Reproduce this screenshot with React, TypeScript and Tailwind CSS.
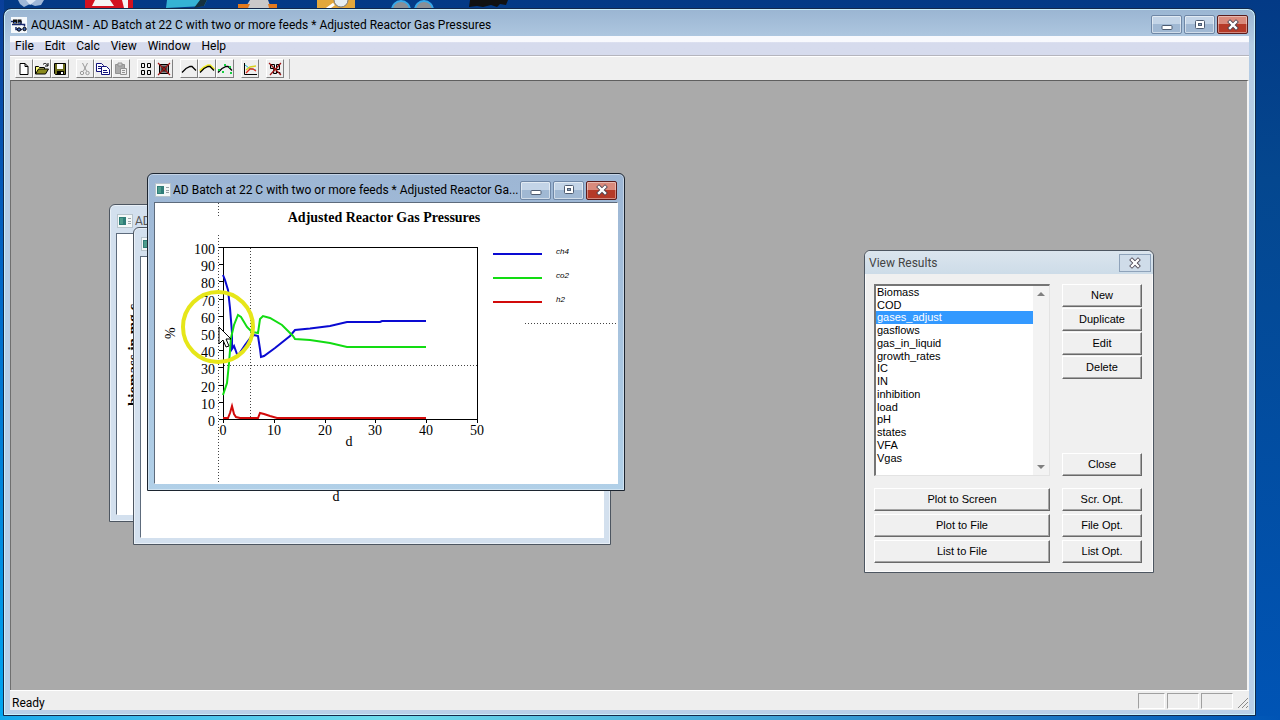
import type { ReactNode } from "react";

const MENUS = ["File", "Edit", "Calc", "View", "Window", "Help"];

const RESULTS = [
  "Biomass",
  "COD",
  "gases_adjust",
  "gasflows",
  "gas_in_liquid",
  "growth_rates",
  "IC",
  "IN",
  "inhibition",
  "load",
  "pH",
  "states",
  "VFA",
  "Vgas",
];

const SERIES = [
  {
    name: "ch4",
    color: "#0a0ad2",
    points:
      "68,72 70,77 73,87 75,105 77,130 77,146 79,143 82,151 84,151 90,142 96,134 99,132 103,133 105,146 106,154 109,153 120,145 135,133 140,127 155,125.500 175,123 192,119 225,119 227,118 271,118",
  },
  {
    name: "co2",
    color: "#12dc12",
    points:
      "68,192 72,180 74,160 76,135 79,122 83,112 86,114 92,124 97,129 103,130 105,116 108,113 115,115 127,122 138,133 140,136 155,137 175,140 192,144 271,144",
  },
  {
    name: "h2",
    color: "#d20a0a",
    points: "68,215 73,215 75,210 77,203 79,211 81,214 85,215 103,215 105,210 109,211 115,213 122,215 271,215",
  },
];

function ToolButton({ label, children }: { label: string; children: ReactNode }) {
  return (
    <button
      type="button"
      aria-label={label}
      className="flex h-[19px] w-[18px] items-center justify-center border border-t-white border-r-[#808080] border-b-[#808080] border-l-white bg-[#efefef]"
    >
      <svg viewBox="0 0 16 16" className="h-4 w-4 shrink-0" fill="none" stroke="#000">
        {children}
      </svg>
    </button>
  );
}

function Toolbar() {
  return (
    <div className="flex h-6 items-center border-t border-white bg-[#efefef] pl-[5px]">
      <div className="flex gap-[7px]">
        <div className="flex">
          <ToolButton label="New">
            <path d="M4 2.500h5l3 3v8H4zM9 2.500v3h3" fill="#fff" />
          </ToolButton>
          <ToolButton label="Open">
            <path d="M1.500 13V5.500h3l1 1h5V8" fill="#ffff80" />
            <path d="M1.500 13l3-5h10l-3 5z" fill="#8a8a1c" />
            <path d="M9 3.500c2-2 3.500-1 4.500 1M14 2v3h-3" />
          </ToolButton>
          <ToolButton label="Save">
            <path d="M2.500 2.500h11v11h-10l-1-1z" fill="#6c6c1a" />
            <path d="M5 3h6v5H5z" fill="#fff" stroke="none" />
            <path d="M5 10h7v4H5z" fill="#000" stroke="none" />
            <path d="M9 11h2v2H9z" fill="#fff" stroke="none" />
          </ToolButton>
        </div>
        <div className="flex">
          <ToolButton label="Cut">
            <g stroke="#999">
              <path d="M5.500 2l4 8M10.500 2l-4 8" />
              <circle cx="5" cy="12" r="1.700" />
              <circle cx="10.500" cy="12" r="1.700" />
            </g>
          </ToolButton>
          <ToolButton label="Copy">
            <path d="M1.500 2.500h5l2 2v6h-7z" fill="#fff" stroke="#10107a" />
            <path d="M6.500 5.500h5l3 3v5h-8z" fill="#fff" stroke="#10107a" />
            <path d="M3 5.500h3M3 7.500h3M8 9.500h4M8 11.500h5" stroke="#10107a" />
          </ToolButton>
          <ToolButton label="Paste">
            <path d="M2.500 3.500h9v9h-9z" fill="#aaa" stroke="#929292" />
            <path d="M5 2h4v3H5z" fill="#ccc" stroke="#929292" />
            <path d="M7.500 7.500h6v6h-6z" fill="#eee" stroke="#929292" />
            <path d="M9 9.500h3M9 11.500h3" stroke="#929292" />
          </ToolButton>
        </div>
        <div className="flex">
          <ToolButton label="Compartments">
            <path d="M3.500 2.500h3v4h-3zM9.500 2.500h3v4h-3zM3.500 9.500h3v4h-3zM9.500 9.500h3v4h-3z" />
          </ToolButton>
          <ToolButton label="Delete compartments">
            <path d="M3.500 3.500h9v9h-9z" fill="#888" />
            <path d="M6 6h4v4H6z" fill="#444" />
            <path d="M2 2l12 12M14 2L2 14" stroke="#a01414" strokeWidth="1.200" />
          </ToolButton>
        </div>
        <div className="flex">
          <ToolButton label="Simulation">
            <path d="M1 11.500l4-4 4-2h2l4 4" strokeWidth="1.300" />
          </ToolButton>
          <ToolButton label="Sensitivity analysis">
            <path d="M1 10l4-3.500 4-2h2l4 4" stroke="#f2ee2a" strokeWidth="2.500" />
            <path d="M1 11.500l4-4 4-2h2l4 4" strokeWidth="1.300" />
          </ToolButton>
          <ToolButton label="Parameter estimation">
            <path d="M1 11.500l4-4 4-2h2l4 4" strokeWidth="1.300" />
            <path d="M1 8h2v2H1zM5 10h2v2H5zM7 3h2v2H7zM12 5h2v2h-2zM13 11h2v2h-2z" fill="#16d040" stroke="none" />
          </ToolButton>
        </div>
        <div className="flex">
          <ToolButton label="View results">
            <path d="M2.500 2v11.500H15" />
            <path d="M3 4l4 3 3 1 4 1" stroke="#18b8c8" />
            <path d="M4 9l4-3 6-1" stroke="#d8d020" strokeWidth="1.500" />
            <path d="M4 12l4-4h3l3 2" stroke="#e03020" strokeWidth="1.300" />
          </ToolButton>
        </div>
        <div className="flex">
          <ToolButton label="Delete states">
            <path d="M3.500 3.500h4v4h-4zM9.500 3.500h3v5h-3zM6.500 8.500h3v4h-3z" fill="#ccc" />
            <path d="M10 11.500h3v2" />
            <path d="M2 2l12 12M14 2L3 14" stroke="#a01414" strokeWidth="1.200" />
          </ToolButton>
        </div>
      </div>
      <div className="ml-[5px] h-5 w-px bg-[#a8a8a8]" />
    </div>
  );
}

function MinimizeGlyph() {
  return (
    <svg viewBox="0 0 14 12" className="h-3 w-3.5">
      <rect x="2" y="6.500" width="10" height="4" rx="1" fill="#fff" stroke="#4d5b70" />
    </svg>
  );
}

function MaximizeGlyph() {
  return (
    <svg viewBox="0 0 14 12" className="h-3 w-3.5">
      <rect x="2.500" y="1.500" width="9" height="8" rx="1" fill="#fff" stroke="#4d5b70" />
      <rect x="5.500" y="4.500" width="3" height="2" fill="#8da4c0" stroke="#4d5b70" />
    </svg>
  );
}

function CloseGlyph() {
  return (
    <svg viewBox="0 0 14 12" className="h-3 w-3.5" strokeLinecap="square">
      <path d="M4 3l6 6M10 3l-6 6" stroke="#4b4350" strokeWidth="4" />
      <path d="M4 3l6 6M10 3l-6 6" stroke="#fff" strokeWidth="2.400" />
    </svg>
  );
}

function CaptionButtons() {
  const plain =
    "flex h-[19px] w-[31px] items-center justify-center rounded-xs border border-[#6f87a6] bg-linear-to-b from-[#c3d4e7] from-50% to-[#a0b8d3] to-50% inset-ring inset-ring-white/50";

  return (
    <div className="flex shrink-0 gap-0.5">
      <button type="button" aria-label="Minimize" className={plain}>
        <MinimizeGlyph />
      </button>
      <button type="button" aria-label="Maximize" className={plain}>
        <MaximizeGlyph />
      </button>
      <button
        type="button"
        aria-label="Close"
        className="flex h-[19px] w-[31px] items-center justify-center rounded-xs border border-[#5b1c1c] bg-linear-to-b from-[#d98a7c] from-50% to-[#b53a28] to-50% inset-ring inset-ring-white/40"
      >
        <CloseGlyph />
      </button>
    </div>
  );
}

function DocumentIcon() {
  return (
    <svg viewBox="0 0 16 14" className="h-3.5 w-4 shrink-0">
      <rect x="0.500" y="0.500" width="15" height="13" fill="#f4f8f8" stroke="#b7c4cc" />
      <rect x="2" y="3" width="7" height="8" fill="#2f7d78" />
      <rect x="3" y="4" width="3" height="6" fill="#4d9c8c" />
      <path d="M11 4.500h3M11 7.500h3M11 9.500h3" stroke="#9aa4a8" />
    </svg>
  );
}

function GasChart() {
  const yTicks = [0, 10, 20, 30, 40, 50, 60, 70, 80, 90, 100];
  const xTicks = [0, 10, 20, 30, 40, 50];

  return (
    <svg viewBox="0 0 462 280" className="block h-[280px] w-full" fontFamily="'Liberation Serif', serif" fontSize="14">
      <text x="229" y="19" textAnchor="middle" fontWeight="bold">
        Adjusted Reactor Gas Pressures
      </text>

      <g stroke="#000" fill="none">
        <path d="M68.500 44.500H322.500V216.500H68.500Z" shapeRendering="crispEdges" />
        {yTicks.map((tick) => (
          <path key={tick} d={`M64 ${Math.round(216 - tick * 1.72) + 0.5}h5`} />
        ))}
        {xTicks.map((tick) => (
          <path key={tick} d={`M${Math.round(68 + tick * 5.08) + 0.5} 216v4`} />
        ))}
        <path d="M63.500 0V14M63.500 32V280M95.500 45V216M69 162.500H322M370 120.500H462" stroke="#444" strokeDasharray="1 2" />
      </g>

      {yTicks.map((tick) => (
        <text key={tick} x="60" y={Math.round(223 - tick * 1.72)} textAnchor="end">
          {tick}
        </text>
      ))}
      {xTicks.map((tick) => (
        <text key={tick} x={Math.round(68 + tick * 5.08)} y="232" textAnchor="middle">
          {tick}
        </text>
      ))}
      <text x="194" y="243" textAnchor="middle">
        d
      </text>
      <text transform="translate(20 136) rotate(-90)">%</text>

      {SERIES.map((series, index) => (
        <g key={series.name}>
          <polyline points={series.points} fill="none" stroke={series.color} strokeWidth="2" />
          <path d={`M338 ${51 + index * 24}h49`} stroke={series.color} strokeWidth="2" />
          <text
            x="401"
            y={51 + index * 24}
            fontFamily="'Liberation Sans Narrow', 'Liberation Sans', sans-serif"
            fontSize="8"
            fontStyle="italic"
          >
            {series.name}
          </text>
        </g>
      ))}

      <circle cx="63" cy="124" r="35" fill="none" stroke="#e6e619" strokeWidth="4" />
      <path d="M64 124v17l4-4 3 7 3-1-3-7h5z" fill="#fff" stroke="#000" />
    </svg>
  );
}

function ChildWindow({
  title,
  active = false,
  position,
  children,
}: {
  title: string;
  active?: boolean;
  position: string;
  children: ReactNode;
}) {
  return (
    <section
      className={`absolute flex h-[318px] w-[478px] flex-col rounded-t-md border px-1.5 pb-1.5 inset-ring ${position} ${
        active
          ? "border-[#1c2530] bg-linear-to-b from-[#9db6d4] to-[#b1d0e8] inset-ring-white/40"
          : "border-[#4d5661] bg-[#d3e0ee] inset-ring-white/50"
      }`}
    >
      <header className="flex h-7 shrink-0 items-center gap-0.5 pt-1 pr-px pl-px">
        <DocumentIcon />
        <h2 className={`min-w-0 flex-1 text-[12px] whitespace-nowrap ${active ? "text-black" : "text-[#555]"}`}>
          {title}
        </h2>
        {active ? <CaptionButtons /> : null}
      </header>
      <div className="flex-1 overflow-hidden border border-t-[#5d6b7c] border-r-white border-b-white border-l-[#5d6b7c] bg-white">
        {children}
      </div>
    </section>
  );
}

function DialogButton({ children }: { children: ReactNode }) {
  return (
    <button
      type="button"
      className="h-[23px] w-full border border-t-white border-r-[#696969] border-b-[#696969] border-l-white bg-[#f0f0f0] text-[11px] leading-none shadow-[inset_-1px_-1px_0_#a5a5a5]"
    >
      {children}
    </button>
  );
}

function ViewResults() {
  return (
    <section className="absolute top-[169px] left-[853px] flex w-[290px] flex-col rounded-t-md border border-[#4d5661] bg-[#f0f0f0] font-['Liberation_Sans',sans-serif] inset-ring inset-ring-white/70">
      <header className="flex h-[23px] items-center justify-between rounded-t-md bg-linear-to-b from-[#dbe5ee] to-[#cddce8] pr-0.5 pl-1">
        <h2 className="font-[Roboto,sans-serif] text-[12px] text-[#444]">View Results</h2>
        <button
          type="button"
          aria-label="Close"
          className="flex h-[18px] w-8 items-center justify-center border border-[#8fa3ba] bg-[#cfdce9]"
        >
          <CloseGlyph />
        </button>
      </header>

      <div className="flex flex-col gap-3 pt-2.5 pr-[11px] pb-[9px] pl-[9px]">
        <div className="flex h-48 gap-3">
          <div className="flex flex-1 border-t-2 border-r border-b border-l-2 border-t-[#757575] border-r-[#e3e3e3] border-b-[#e3e3e3] border-l-[#757575] bg-white">
            <select
              size={14}
              aria-label="Results"
              defaultValue="gases_adjust"
              className="flex-1 overflow-hidden bg-white text-[11px] outline-none"
            >
              {RESULTS.map((result) => (
                <option
                  key={result}
                  className="h-[13px] min-h-0 p-0 pl-px leading-[13px] checked:bg-linear-to-r checked:from-[#3399ff] checked:to-[#3399ff] checked:[-webkit-text-fill-color:#fff] nth-[4n+2]:h-3 nth-[4n+2]:leading-3"
                >
                  {result}
                </option>
              ))}
            </select>
            <div className="flex w-4 flex-col justify-between bg-[#f3f3f3]">
              <button type="button" aria-label="Scroll up" className="flex h-4 items-center justify-center">
                <svg viewBox="0 0 8 4" className="h-1 w-2">
                  <path d="M0 4l4-4 4 4z" fill="#808080" />
                </svg>
              </button>
              <button type="button" aria-label="Scroll down" className="flex h-4 items-center justify-center">
                <svg viewBox="0 0 8 4" className="h-1 w-2">
                  <path d="M0 0l4 4 4-4z" fill="#808080" />
                </svg>
              </button>
            </div>
          </div>
          <div className="flex w-20 flex-col justify-between">
            <div className="flex flex-col gap-px">
              <DialogButton>New</DialogButton>
              <DialogButton>Duplicate</DialogButton>
              <DialogButton>Edit</DialogButton>
              <DialogButton>Delete</DialogButton>
            </div>
            <DialogButton>Close</DialogButton>
          </div>
        </div>

        <div className="grid grid-cols-[1fr_80px] gap-x-3 gap-y-[3px]">
          <DialogButton>Plot to Screen</DialogButton>
          <DialogButton>Scr. Opt.</DialogButton>
          <DialogButton>Plot to File</DialogButton>
          <DialogButton>File Opt.</DialogButton>
          <DialogButton>List to File</DialogButton>
          <DialogButton>List Opt.</DialogButton>
        </div>
      </div>
    </section>
  );
}

function DesktopIcons() {
  return (
    <svg viewBox="0 0 520 8" className="block h-2 w-[520px]" aria-hidden="true">
      <path d="M18 0h26l-3 5-6 1-5-2-6 3-4-3z" fill="#9fb8d8" />
      <path d="M26 0l4 5 6-5z" fill="#dbe6f3" />
      <path d="M85 0h48v8H85z" fill="#d3121f" />
      <path d="M95 0h15l4 6H92zM122 0h6v8h-4z" fill="#f4f4f4" />
      <path d="M167 0h40l-3 6-38 2z" fill="#35b3d4" />
      <path d="M200 0h7l-3 6-10 2z" fill="#15323f" />
      <path d="M250 0h18l3 8h-26z" fill="#c9c9c9" />
      <path d="M238 4h12l-2 4h-10zM268 4h9v4h-8z" fill="#e27a1d" />
      <path d="M317 0h38v8h-38z" fill="#e3a83c" />
      <circle cx="341" cy="0" r="7" fill="#e6eef2" stroke="#777" />
      <path d="M334 4l-7 5" stroke="#fff" strokeWidth="3" />
      <circle cx="401" cy="10" r="9" fill="#8a8f96" stroke="#37a8e8" strokeWidth="2" />
      <circle cx="424" cy="10" r="9" fill="#8a8f96" stroke="#37a8e8" strokeWidth="2" />
      <path d="M470 0h38l-2 5-6-1-3 3-6-2-8 2-6-1-8 1z" fill="#111" />
    </svg>
  );
}

function AppIcon() {
  return (
    <svg viewBox="0 0 16 16" className="h-4 w-4 shrink-0">
      <path d="M0 0h16v16H0z" fill="#f6f9fc" />
      <path d="M0 4.500h2M1 7.500h9M10 4v4M10.500 7.500h3v2M5 10v2.500h6" stroke="#16286e" strokeWidth="1.500" fill="none" />
      <path d="M2 2.500h4v4H2zM6.500 2.500h4v4h-4z" fill="#111" />
      <path d="M3 5h2v1H3zM7.500 5h2v1h-2z" fill="#3c62b4" />
      <circle cx="8" cy="12.500" r="1.700" fill="#3c62b4" stroke="#000" />
      <circle cx="13.500" cy="12" r="1.700" fill="#3c62b4" stroke="#000" />
    </svg>
  );
}

export default function App() {
  return (
    <div className="flex min-h-screen flex-col bg-[linear-gradient(#0a3f9a,#0068c8_40%,#00a6f2),linear-gradient(#033a86,#04478f_25%,#0054b5)] bg-[length:4px_100%,100%_100%] bg-no-repeat font-[Roboto,sans-serif] text-black">
      <DesktopIcons />

      <main className="mr-6 ml-[3px] flex flex-1 flex-col rounded-t-lg border border-[#14294a] bg-[linear-gradient(#9ab5d2,#b4cce4_36px,#b9cfe8)] px-1.5 pb-[5px] inset-ring inset-ring-[#c8f0fc]">
        <header className="flex h-[27px] items-center gap-1 pt-1 pr-px pl-px">
          <AppIcon />
          <h1 className="flex-1 truncate text-[12px]">
            AQUASIM - AD Batch at 22 C with two or more feeds * Adjusted Reactor Gas Pressures
          </h1>
          <CaptionButtons />
        </header>

        <nav className="flex h-5 items-center gap-[11px] border-b border-[#b5b5bd] bg-linear-to-b from-[#f8f9fd] from-30% to-[#d6dbed] to-35% pl-[5px]">
          {MENUS.map((menu) => (
            <button key={menu} type="button" className="text-[12px] leading-none">
              {menu}
            </button>
          ))}
        </nav>

        <Toolbar />

        <div className="relative flex-1 overflow-hidden border-t border-r-2 border-l border-t-[#5f5f5f] border-r-[#f4f4f4] border-l-[#6f6f6f] bg-[#aaaaaa]">
          <ChildWindow title="AD Batch at 22 C" position="top-[123px] left-[98px]">
            <svg viewBox="0 0 462 280" className="block h-[280px] w-full" fontFamily="'Liberation Serif', serif">
              <text transform="translate(21 172) rotate(-90)" fontSize="15" fontWeight="bold">
                biomass in mg c
              </text>
            </svg>
          </ChildWindow>
          <ChildWindow title="AD Batch at 22 C" position="top-[146px] left-[122px]">
            <svg viewBox="0 0 462 280" className="block h-[280px] w-full" fontFamily="'Liberation Serif', serif">
              <text x="195" y="244" textAnchor="middle" fontSize="14">
                d
              </text>
            </svg>
          </ChildWindow>
          <ChildWindow
            active
            title="AD Batch at 22 C with two or more feeds * Adjusted Reactor Ga..."
            position="top-[92px] left-[136px]"
          >
            <GasChart />
          </ChildWindow>
          <ViewResults />
        </div>

        <footer className="flex h-5 items-center justify-between border-t border-white bg-[#eeeeee] pl-0.5 text-[12px]">
          <span className="pt-1">Ready</span>
          <div className="flex h-4 gap-0.5">
            <div className="w-[27px] border border-t-[#a0a0a0] border-r-white border-b-white border-l-[#a0a0a0]" />
            <div className="w-8 border border-t-[#a0a0a0] border-r-white border-b-white border-l-[#a0a0a0]" />
            <div className="w-8 border border-t-[#a0a0a0] border-r-white border-b-white border-l-[#a0a0a0]" />
            <svg viewBox="0 0 14 16" className="h-4 w-3.5" stroke="#8a8a8a">
              <path d="M3 15L13 5M7 15l6-6M11 15l2-2" />
            </svg>
          </div>
        </footer>
      </main>

      <div className="h-1 bg-linear-to-r from-[#12a8ec] via-[#6fdcec] via-30% to-[#0054b5]" />
    </div>
  );
}
